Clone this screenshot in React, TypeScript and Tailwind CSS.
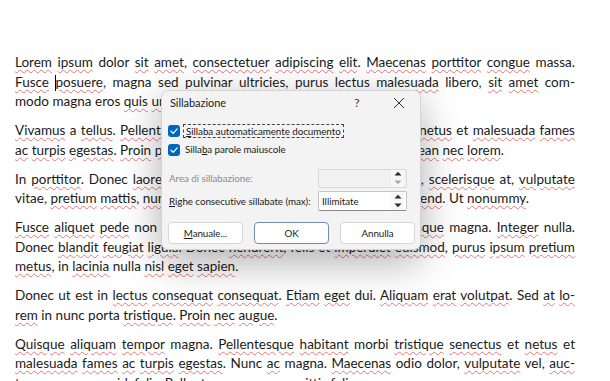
import React from 'react';

// Document paragraphs, one string per visual line.
// "*" marks a word with a spelling squiggle, "|" puts the text cursor before a word.
const PARAS: string[][] = [
  [
    '*Lorem *ipsum dolor *sit *amet, *consectetuer *adipiscing *elit. *Maecenas *porttitor *congue massa.',
    '*Fusce |*posuere, magna sed *pulvinar *ultricies, *purus *lectus *malesuada libero, *sit *amet com-',
    'modo magna eros *quis *urna.',
  ],
  [
    '*Vivamus a *tellus. *Pellentesque *habitant morbi *tristique *senectus et *netus et *malesuada *fames',
    '*ac *turpis *egestas. *Proin *pharetra *nonummy pede. *Mauris et *orci. *Aenean *nec *lorem.',
  ],
  [
    'In *porttitor. Donec *laoreet *nonummy *augue. *Suspendisse dui *purus, *scelerisque at, *vulputate',
    'vitae, *pretium *mattis, *nunc. *Mauris *eget *neque at sem *venenatis *eleifend. Ut *nonummy.',
  ],
  [
    '*Fusce *aliquet *pede non *pede. *Suspendisse *dapibus lorem *pellentesque magna. *Integer nulla.',
    'Donec *blandit *feugiat *ligula. Donec *hendrerit, felis et *imperdiet *euismod, *purus *ipsum *pretium',
    '*metus, in *lacinia nulla *nisl *eget *sapien.',
  ],
  [
    'Donec ut est in *lectus *consequat *consequat. *Etiam *eget dui. *Aliquam *erat *volutpat. Sed *at *lo-',
    '*rem in nunc porta *tristique. *Proin *nec *augue.',
  ],
  [
    '*Quisque *aliquam *tempor magna. *Pellentesque *habitant morbi *tristique *senectus et *netus et',
    '*malesuada *fames *ac *turpis *egestas. Nunc *ac magna. *Maecenas odio dolor, *vulputate vel, *auc-',
    'tor ac, *accumsan id, felis. *Pellentesque *cursus *sagittis felis.',
  ],
];

function Word({ token }: { token: string }) {
  let t = token;
  let cursor = false;
  if (t.startsWith('|')) {
    cursor = true;
    t = t.slice(1);
  }
  const caret = cursor ? (
    <span className="inline-block w-px h-[16px] bg-black align-[-4px] -mr-px" />
  ) : null;
  if (!t.startsWith('*')) return <>{caret}{t}</>;
  const m = t.slice(1).match(/^(.*?)([.,:;]*)$/);
  const word = m ? m[1] : t.slice(1);
  const punct = m ? m[2] : '';
  return (
    <>
      {caret}
      <span className="underline decoration-wavy decoration-[#e2575c]/80 decoration-1 underline-offset-[2px]">{word}</span>
      {punct}
    </>
  );
}

function Line({ text, last }: { text: string; last: boolean }) {
  const tokens = text.split(' ');
  return (
    <div className={last ? 'text-left' : 'text-justify [text-align-last:justify]'}>
      {tokens.map((tk, i) => (
        <React.Fragment key={i}>
          <Word token={tk} />
          {i < tokens.length - 1 ? ' ' : ''}
        </React.Fragment>
      ))}
    </div>
  );
}

function Check() {
  return (
    <span className="w-[12px] h-[12px] rounded-[3px] bg-[#0067c0] flex items-center justify-center shrink-0">
      <svg width="10" height="10" viewBox="0 0 10 10" fill="none">
        <path d="M2 5.2 L4.2 7.3 L8.2 2.9" stroke="white" strokeWidth="1.2" strokeLinecap="round" strokeLinejoin="round" />
      </svg>
    </span>
  );
}

function Spinner({ downDisabled }: { downDisabled?: boolean }) {
  return (
    <div className="flex flex-col gap-[1px] pr-[2px]">
      <div className="w-[13px] h-[8px] flex items-center justify-center bg-[#f7f7f7]">
        <svg width="8" height="5" viewBox="0 0 8 5">
          <path d="M0.5 4.5 L4 0.8 L7.5 4.5 Z" fill="#2b2b2b" />
        </svg>
      </div>
      <div className="w-[13px] h-[8px] flex items-center justify-center bg-[#f7f7f7]">
        <svg width="8" height="5" viewBox="0 0 8 5">
          <path d="M0.5 0.5 L4 4.2 L7.5 0.5 Z" fill={downDisabled ? '#a8a8a8' : '#2b2b2b'} />
        </svg>
      </div>
    </div>
  );
}

function Dialog() {
  return (
    <div className="absolute left-[161px] top-[90px] w-[260px] h-[160px] bg-[#f3f3f3] border border-[#d4d4d4] rounded-[7px] shadow-[0_12px_40px_rgba(0,0,0,0.32)] text-[#1b1b1b] font-['Lato',sans-serif] text-[9.8px] tracking-[-0.05px] whitespace-nowrap flex flex-col">
      {/* title bar */}
      <div className="h-[24px] flex items-center">
        <span className="pl-[8px] text-[11px] flex-1">Sillabazione</span>
        <span className="w-[42px] text-center text-[12px] text-[#333]">?</span>
        <span className="w-[42px] flex items-center justify-center">
          <svg width="12" height="12" viewBox="0 0 12 12">
            <path d="M1 1 L11 11 M11 1 L1 11" stroke="#333" strokeWidth="1" />
          </svg>
        </span>
      </div>

      {/* checkboxes */}
      <div className="mt-[6px] pl-[6px] flex flex-col">
        <div className="h-[19px] flex items-center gap-[3px]">
          <Check />
          <span className="border border-dashed border-[#444] px-[2px] leading-[12px]">
            <span className="underline underline-offset-1">S</span>illaba automaticamente documento
          </span>
        </div>
        <div className="h-[19px] flex items-center gap-[4px]">
          <Check />
          <span className="px-[1px]">
            Silla<span className="underline underline-offset-1">b</span>a parole maiuscole
          </span>
        </div>
      </div>

      {/* fields */}
      <div className="mt-[9px] pl-[7px] pr-[13px] flex flex-col gap-[3px]">
        <div className="h-[20px] flex items-center justify-between">
          <span className="text-[#8a8a8a]">Area di sillabazione:</span>
          <div className="w-[89px] h-[19px] border border-[#d9d9d9] rounded-[2px] bg-[#f1f1f1] flex items-center justify-end">
            <Spinner downDisabled />
          </div>
        </div>
        <div className="h-[20px] flex items-center justify-between">
          <span>
            <span className="underline underline-offset-1">R</span>ighe consecutive sillabate (max):
          </span>
          <div className="w-[89px] h-[20px] border border-[#c4c4c4] border-b-[#8a8a8a] rounded-[2px] bg-white flex items-center">
            <span className="flex-1 pl-[3px]">Illimitate</span>
            <Spinner />
          </div>
        </div>
      </div>

      {/* buttons */}
      <div className="mt-[11px] pl-[6px] flex gap-[11px]">
        <div className="w-[75px] h-[22px] rounded-[4px] bg-white border border-[#d6d6d6] flex items-center justify-center">
          <span>
            <span className="underline underline-offset-1">M</span>anuale...
          </span>
        </div>
        <div className="w-[75px] h-[22px] rounded-[4px] bg-white border border-[#6f8fae] flex items-center justify-center">
          OK
        </div>
        <div className="w-[75px] h-[22px] rounded-[4px] bg-white border border-[#d6d6d6] flex items-center justify-center">
          Annulla
        </div>
      </div>
    </div>
  );
}

export default function App() {
  return (
    <div className="relative w-[610px] h-[381px] overflow-hidden bg-white">
      <div className="pt-[53px] pl-[15px] w-[575px] font-['Lato',sans-serif] text-[13.5px] leading-[19.5px] text-[#1a1a1a] flex flex-col gap-[9.5px]">
        {PARAS.map((p, pi) => (
          <div key={pi}>
            {p.map((l, li) => (
              <Line key={li} text={l} last={li === p.length - 1} />
            ))}
          </div>
        ))}
      </div>
      <Dialog />
    </div>
  );
}
